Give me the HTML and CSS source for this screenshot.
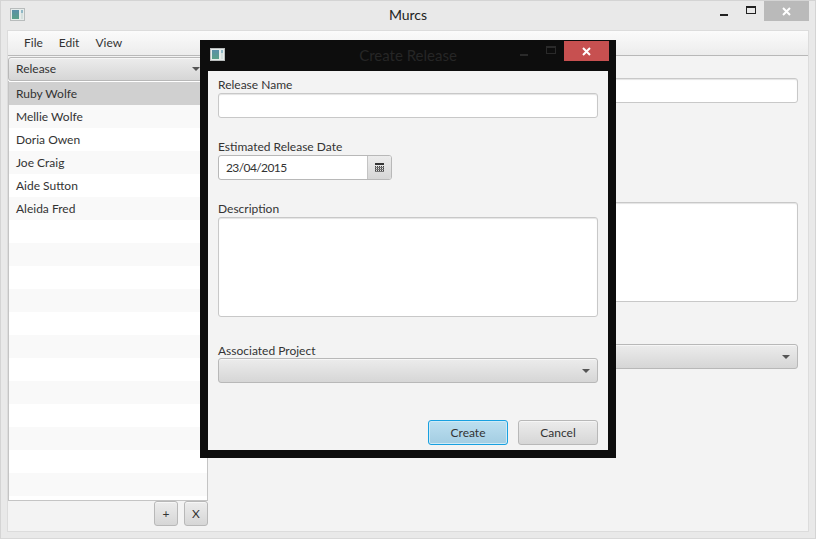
FILE: index.html
```html
<!DOCTYPE html>
<html lang="en">
<head>
<meta charset="utf-8">
<title>Murcs</title>
<link rel="stylesheet" href="styles.css">
</head>
<body>
<div class="window">
  <header class="titlebar">
    <svg class="appicon" width="15" height="13" viewBox="0 0 15 13"><defs><linearGradient id="g" x1="0" y1="0" x2="0" y2="1"><stop offset="0" stop-color="#5a8fa8"/><stop offset="1" stop-color="#5aa088"/></linearGradient></defs><rect x=".5" y=".5" width="14" height="12" fill="#e6eceb" stroke="#b8bcbc"/><rect x="2" y="2" width="7" height="9" fill="url(#g)"/><rect x="11" y="2" width="2" height="3" fill="#90b8c6"/><rect x="11" y="5" width="2" height="6" fill="#d4dfdd"/></svg>
    <span class="title">Murcs</span>
    <div class="winbtns">
      <span class="wb"><i class="min"></i></span>
      <span class="wb"><i class="max"></i></span>
      <span class="wb close"><svg width="9" height="9" viewBox="0 0 9 9"><path d="M1 1l7 7M8 1L1 8" stroke="#fff" stroke-width="2"/></svg></span>
    </div>
  </header>
  <div class="client">
    <nav class="menubar"><span>File</span><span>Edit</span><span>View</span></nav>
    <div class="split">
      <aside class="left">
        <div class="combo top"><span>Release</span><b class="arrow"></b></div>
        <ul class="list">
          <li class="on">Ruby Wolfe</li><li>Mellie Wolfe</li><li>Doria Owen</li><li>Joe Craig</li><li>Aide Sutton</li><li>Aleida Fred</li>
          <li></li><li></li><li></li><li></li><li></li><li></li><li></li><li></li><li></li><li></li><li></li><li></li>
        </ul>
        <div class="listbtns"><button class="btn small">+</button><button class="btn small">X</button></div>
      </aside>
      <main class="form">
        <div class="field f1"></div>
        <div class="field f2"></div>
        <div class="combo f3"><span></span><b class="arrow"></b></div>
      </main>
    </div>
  </div>
</div>
<section class="dialog">
  <header class="dlgbar">
    <svg class="appicon" width="15" height="13" viewBox="0 0 15 13"><rect x=".5" y=".5" width="14" height="12" fill="#e6eceb" stroke="#b8bcbc"/><rect x="2" y="2" width="7" height="9" fill="url(#g)"/><rect x="11" y="2" width="2" height="3" fill="#90b8c6"/><rect x="11" y="5" width="2" height="6" fill="#d4dfdd"/></svg>
    <span class="dlgtitle">Create Release</span>
    <div class="dlgbtns">
      <span class="db"><i class="min dim"></i></span>
      <span class="db"><i class="max dim"></i></span>
      <span class="db closered"><svg width="9" height="9" viewBox="0 0 9 9"><path d="M1 1l7 7M8 1L1 8" stroke="#fff" stroke-width="2"/></svg></span>
    </div>
  </header>
  <div class="dlgbody">
    <label class="lbl l1">Release Name</label>
    <div class="field d1"></div>
    <label class="lbl l2">Estimated Release Date</label>
    <div class="date"><span class="dateval">23/04/2015</span><span class="cal"><svg width="9" height="9" viewBox="0 0 9 9"><rect width="9" height="2" fill="#333"/><path d="M0 3h1v1H0zM2 3h1v1H2zM4 3h1v1H4zM6 3h1v1H6zM8 3h1v1H8zM0 5h1v1H0zM2 5h1v1H2zM4 5h1v1H4zM6 5h1v1H6zM8 5h1v1H8zM0 7h1v1H0zM2 7h1v1H2zM4 7h1v1H4zM6 7h1v1H6zM8 7h1v1H8z" fill="#444"/><path d="M0 4h9v1H0zM0 6h9v1H0zM0 8h9v1H0z" fill="#777"/></svg></span></div>
    <label class="lbl l3">Description</label>
    <div class="field d3"></div>
    <label class="lbl l4">Associated Project</label>
    <div class="combo d4"><span></span><b class="arrow"></b></div>
    <div class="actions"><button class="btn primary">Create</button><button class="btn">Cancel</button></div>
  </div>
</section>
</body>
</html>
```
FILE: styles.css
```css
* { box-sizing: border-box; }
html, body { margin: 0; padding: 0; height: 100%; overflow: hidden; }
body { font: 12px/16px "Lato", "Noto Sans", sans-serif; color: #333; background: #e9e9e9; position: relative; }
.window { width: 816px; height: 539px; display: flex; flex-direction: column; border: 1px solid #d4d4d4; border-bottom-color: #d8d8d8; padding: 0 6px 6px; background: #e9e9e9; }
.titlebar { height: 29px; flex: none; display: flex; align-items: center; position: relative; }
.titlebar .appicon { margin: -2px 0 0 3px; }
.title { position: absolute; left: 0; right: 0; text-align: center; font-size: 14px; color: #222; top: 6px; pointer-events: none; }
.winbtns { margin-left: auto; display: flex; align-self: flex-start; position: relative; }
.wb { width: 27px; height: 20px; display: flex; align-items: center; justify-content: center; }
.wb.close { width: 45px; background: #bababa; }
.min { display: block; width: 8px; height: 2px; background: #222; margin-top: 7px; }
.max { display: block; width: 10px; height: 8px; border: 1px solid #222; border-top-width: 2px; margin-top: -2px; }
.client { flex: 1; display: flex; flex-direction: column; border: 1px solid #dcdcdc; background: #f3f3f3; }
.menubar { height: 25px; flex: none; display: flex; gap: 16px; align-items: center; padding: 0 16px; background: linear-gradient(#fbfbfb, #ececec); border-bottom: 1px solid #b8b8b8; color: #333; }
.split { flex: 1; display: flex; min-height: 0; }
.left { width: 200px; flex: none; padding-top: 1px; display: flex; flex-direction: column; }
.combo { height: 25px; border: 1px solid #b8b8b8; border-radius: 3px; background: linear-gradient(#ececec, #d6d6d6); display: flex; align-items: center; justify-content: space-between; padding: 0 7px; box-shadow: inset 0 1px 0 #f6f6f6; flex: none; }
.combo.top { height: 24px; }
.arrow { width: 0; height: 0; border: 4px solid transparent; border-top: 4px solid #555; border-bottom: 0; }
.list { list-style: none; margin: 0; padding: 1px 0 0; height: 420px; flex: none; background: #fff; border: 1px solid #c4c4c4; border-top: 0; overflow: hidden; }
.list li { height: 23px; line-height: 23px; padding-left: 7px; background: #fff; }
.list li:nth-child(even) { background: #f9f9f9; }
.list li.on { background: #d0d0d0; }
.listbtns { display: flex; justify-content: flex-end; gap: 6px; }
.btn { font: inherit; color: #333; height: 25px; width: 80px; border: 1px solid #b8b8b8; border-radius: 3px; background: linear-gradient(#ececec, #d6d6d6); padding: 0; box-shadow: inset 0 1px 0 #f6f6f6; }
.small { width: 24px; }
.form { flex: 1; padding: 22px 10px 0; display: flex; flex-direction: column; }
.field { background: #fff; border: 1px solid #c8c8c8; border-radius: 3px; box-shadow: inset 0 1px 1px #e4e4e4; }
.f1 { height: 25px; }
.f2 { height: 100px; margin-top: 99px; }
.f3 { margin-top: 42px; }
.dialog { position: absolute; left: 200px; top: 40px; width: 416px; height: 418px; background: #0d0d0d; padding: 0 8px 8px; display: flex; flex-direction: column; }
.dlgbar { height: 31px; flex: none; display: flex; align-items: center; position: relative; }
.dlgbar .appicon { margin: -2px 0 0 2px; }
.dlgtitle { position: absolute; left: 0; right: 0; text-align: center; font-size: 15px; color: #262626; top: 7px; }
.dlgbtns { margin-left: auto; margin-right: -1px; margin-top: 1px; align-self: flex-start; display: flex; position: relative; }
.db { width: 27px; height: 20px; display: flex; align-items: center; justify-content: center; }
.closered { width: 45px; background: #c75050; }
.dim { background: #2a2a2a; }
.max.dim { background: none; border-color: #2a2a2a; }
.dlgbody { flex: 1; background: #f3f3f3; padding: 6px 10px 0; display: flex; flex-direction: column; }
.lbl { display: block; height: 16px; }
.d1 { height: 25px; flex: none; }
.l2 { margin-top: 21px; }
.date { width: 174px; height: 25px; flex: none; display: flex; border: 1px solid #b8b8b8; border-radius: 3px; background: #fff; overflow: hidden; }
.dateval { flex: 1; padding-left: 7px; line-height: 23px; letter-spacing: -0.6px; }
.cal { width: 24px; border-left: 1px solid #c4c4c4; background: linear-gradient(#ececec, #d6d6d6); display: flex; align-items: center; justify-content: center; }
.l3 { margin-top: 21px; }
.d3 { height: 100px; flex: none; }
.l4 { margin-top: 26px; }
.d4 { margin-top: -1px; }
.actions { display: flex; justify-content: flex-end; gap: 10px; margin-top: 37px; }
.primary { border-color: #18a0e0; background: linear-gradient(#bcdff0, #a3cde2); box-shadow: inset 0 0 0 1px #cfeaf6; }
```
